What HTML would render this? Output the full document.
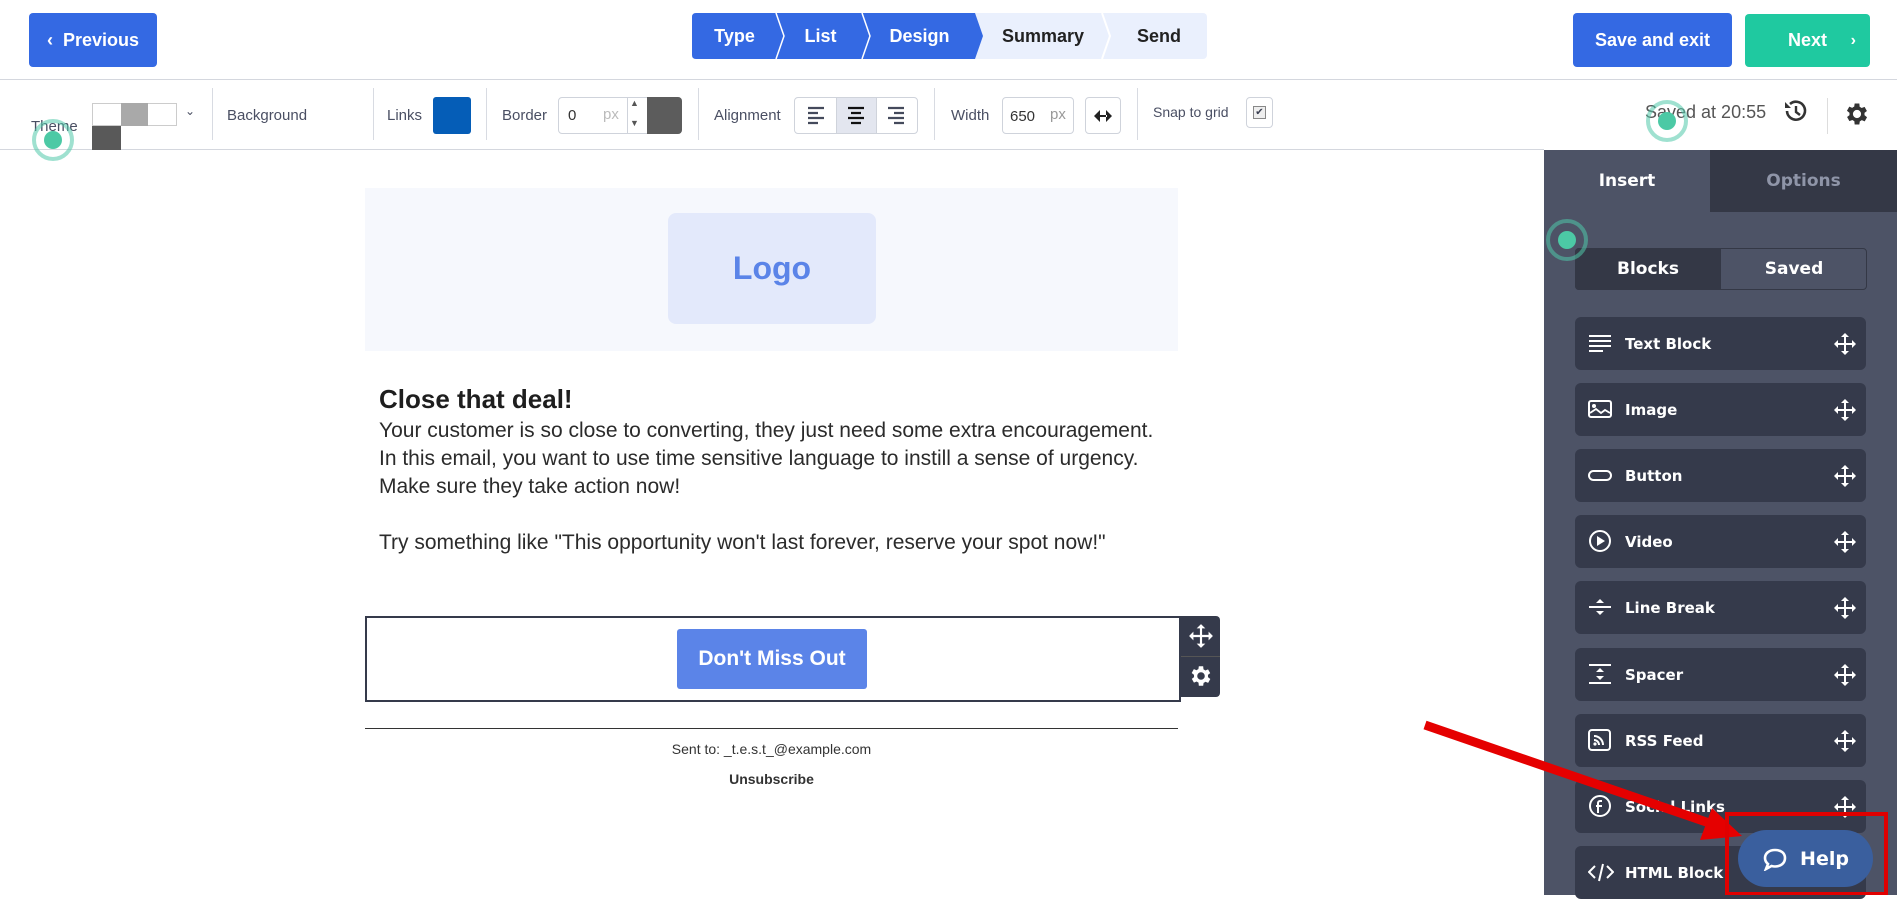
<!DOCTYPE html>
<html><head><meta charset="utf-8"><style>
*{box-sizing:border-box;margin:0;padding:0}
body{width:1897px;height:895px;overflow:hidden;background:#fff;font-family:"Liberation Sans",sans-serif;position:relative;color:#3a3f51}
.a{position:absolute}
.btn{position:absolute;color:#fff;font-weight:bold;font-size:18px;border-radius:4px;display:flex;align-items:center;justify-content:center}
.step{position:absolute;top:13px;height:46px;display:flex;align-items:center;justify-content:center;font-weight:bold;font-size:18px}
.lbl{position:absolute;font-size:15px;color:#4a4f63}
.sep{position:absolute;top:88px;width:1px;height:52px;background:#d8dbe2}
.item{position:absolute;left:1575px;width:291px;height:53px;background:#353a4b;border-radius:6px;color:#fff;font-weight:bold;font-size:15px;font-family:"DejaVu Sans",sans-serif;display:flex;align-items:center;padding-left:50px}
.item svg.ic{position:absolute;left:13px;top:15px}
.ring{position:absolute;width:42px;height:42px;border-radius:50%;border:4px solid rgba(80,200,170,.55)}
.ring:after{content:"";position:absolute;left:8px;top:8px;width:18px;height:18px;border-radius:50%;background:#4cc9a5}
p.t{font-size:21px;line-height:28px;color:#2b2b2b}
.tab{position:absolute;display:flex;align-items:center;justify-content:center;font-weight:bold;font-size:17px;font-family:"DejaVu Sans",sans-serif}
</style></head><body>
<div class="btn" style="left:29px;top:13px;width:128px;height:54px;background:#3469e3">‹&nbsp;&nbsp;Previous</div>
<div class="a" style="left:692px;top:13px;width:515px;height:46px;background:#eaf0fd;border-radius:4px"></div>
<svg class="a" style="left:692px;top:13px" width="420" height="46"><path d="M4 0H283L291 23L283 46H4Q0 46 0 42V4Q0 0 4 0Z" fill="#3469e3"/><path d="M84 0L92 23L84 46M170 0L178 23L170 46" stroke="#fff" stroke-width="1.5" fill="none"/><path d="M410 0L418 23L410 46" stroke="#fff" stroke-width="2" fill="none"/></svg>
<div class="step" style="left:692px;width:85px;color:#fff">Type</div>
<div class="step" style="left:777px;width:87px;color:#fff">List</div>
<div class="step" style="left:864px;width:111px;color:#fff">Design</div>
<div class="step" style="left:975px;width:136px;color:#222">Summary</div>
<div class="step" style="left:1111px;width:96px;color:#222">Send</div>
<div class="btn" style="left:1573px;top:13px;width:159px;height:54px;background:#3469e3">Save and exit</div>
<div class="btn" style="left:1745px;top:14px;width:125px;height:53px;background:#1fc9a0">Next<span style="position:absolute;right:14px;font-size:16px">›</span></div>
<div class="a" style="left:0;top:79px;width:1897px;height:1px;background:#d4d7de"></div>
<div class="a" style="left:0;top:149px;width:1544px;height:1px;background:#d4d7de"></div>

<div class="lbl" style="left:31px;top:118px">Theme</div>
<div class="a" style="left:92px;top:103px;width:85px;height:23px;border:1px solid #ccc;background:#fff"></div>
<div class="a" style="left:121px;top:103px;width:27px;height:23px;background:#a9a9a9"></div>
<div class="a" style="left:92px;top:126px;width:29px;height:24px;background:#595959"></div>
<div class="lbl" style="left:185px;top:104px;font-size:12px">⌄</div>
<div class="sep" style="left:212px"></div>
<div class="lbl" style="left:227px;top:107px">Background</div>
<div class="sep" style="left:373px"></div>
<div class="lbl" style="left:387px;top:107px">Links</div>
<div class="a" style="left:433px;top:97px;width:38px;height:37px;background:#055db7;border-radius:3px"></div>
<div class="sep" style="left:486px"></div>
<div class="lbl" style="left:502px;top:107px">Border</div>
<div class="a" style="left:558px;top:97px;width:124px;height:37px;border:1px solid #cfd3db;border-radius:4px;background:#fff"></div>
<div class="lbl" style="left:568px;top:107px;color:#333">0</div>
<div class="lbl" style="left:603px;top:106px;color:#bbb">px</div>
<div class="a" style="left:627px;top:97px;width:1px;height:37px;background:#cfd3db"></div>
<div class="lbl" style="left:630px;top:98px;font-size:9px;color:#555">▲</div>
<div class="lbl" style="left:630px;top:118px;font-size:9px;color:#555">▼</div>
<div class="a" style="left:647px;top:97px;width:35px;height:37px;background:#5c5c5c;border-radius:0 4px 4px 0"></div>
<div class="sep" style="left:698px"></div>
<div class="lbl" style="left:714px;top:107px">Alignment</div>
<div class="a" style="left:794px;top:97px;width:124px;height:37px;border:1px solid #cfd3db;border-radius:4px;background:#fff"></div>
<div class="a" style="left:836px;top:98px;width:41px;height:35px;background:#e3e6ef;border-left:1px solid #cfd3db;border-right:1px solid #cfd3db"></div>
<svg class="a" style="left:805px;top:105px" width="110" height="20"><g stroke="#444a5c" stroke-width="2.2"><path d="M3 3h16M3 8h10M3 13h16M3 18h10"/><path d="M43 3h16M46 8h10M43 13h16M46 18h10" stroke="#111"/><path d="M83 3h16M89 8h10M83 13h16M89 18h10"/></g></svg>
<div class="sep" style="left:934px"></div>
<div class="lbl" style="left:951px;top:107px">Width</div>
<div class="a" style="left:1002px;top:97px;width:72px;height:37px;border:1px solid #cfd3db;border-radius:4px"></div>
<div class="lbl" style="left:1010px;top:108px;color:#333">650</div>
<div class="lbl" style="left:1050px;top:106px;color:#999">px</div>
<div class="a" style="left:1085px;top:97px;width:36px;height:37px;border:1px solid #cfd3db;border-radius:4px"></div>
<svg class="a" style="left:1093px;top:109px" width="20" height="14"><path d="M1 7L7 1V13ZM19 7L13 1V13Z M6 6h8v2H6z" fill="#222"/></svg>
<div class="sep" style="left:1137px"></div>
<div class="lbl" style="left:1153px;top:104px;font-size:14px">Snap to grid</div>
<div class="a" style="left:1246px;top:97px;width:27px;height:31px;border:1px solid #cfd3db;border-radius:4px"></div>
<div class="a" style="left:1253px;top:106px;width:13px;height:13px;border:1px solid #888;background:#eee;font-size:10px;line-height:12px;text-align:center">✔</div>
<div class="lbl" style="left:1645px;top:102px;font-size:18px;color:#555">Saved at 20:55</div>
<svg class="a" style="left:1782px;top:98px" width="26" height="26"><path d="M5 13A9 9 0 1 0 8 6" stroke="#333" stroke-width="2.6" fill="none"/><path d="M3 4v6h6z" fill="#333"/><path d="M14 8v6l4 3" stroke="#333" stroke-width="2.4" fill="none"/></svg>
<div class="a" style="left:1827px;top:98px;width:1px;height:36px;background:#ddd"></div>
<svg class="a" style="left:1843px;top:100px" width="28" height="28" viewBox="0 0 24 24"><path fill="#333" d="M19.4 13a7.5 7.5 0 0 0 0-2l2.1-1.6-2-3.5-2.5 1a7 7 0 0 0-1.7-1L15 3h-4l-.4 2.7a7 7 0 0 0-1.7 1l-2.5-1-2 3.5L6.6 11a7.5 7.5 0 0 0 0 2l-2.1 1.6 2 3.5 2.5-1a7 7 0 0 0 1.7 1L11 21h4l.4-2.7a7 7 0 0 0 1.7-1l2.5 1 2-3.5zM13 15.5a3.5 3.5 0 1 1 0-7 3.5 3.5 0 0 1 0 7z" transform="translate(-1 0)"/></svg>

<!-- email -->
<div class="a" style="left:365px;top:188px;width:813px;height:163px;background:#f6f8fd"></div>
<div class="a" style="left:668px;top:213px;width:208px;height:111px;background:#e3e9fb;border-radius:8px;display:flex;align-items:center;justify-content:center;color:#5b84e8;font-weight:bold;font-size:32px">Logo</div>
<div class="a" style="left:379px;top:384px;font-size:26px;font-weight:bold;color:#1e1e1e">Close that deal!</div>
<div class="a" style="left:379px;top:417px;width:800px">
<p class="t">Your customer is so close to converting, they just need some extra encouragement.</p>
<p class="t">In this email, you want to use time sensitive language to instill a sense of urgency.</p>
<p class="t">Make sure they take action now!</p>
<p class="t">&nbsp;</p>
<p class="t">Try something like "This opportunity won't last forever, reserve your spot now!"</p></div>
<div class="a" style="left:365px;top:616px;width:816px;height:86px;border:2px solid #353a4b"></div>
<div class="a" style="left:677px;top:629px;width:190px;height:60px;background:#5b84e8;border-radius:3px;color:#fff;font-weight:bold;font-size:21px;display:flex;align-items:center;justify-content:center">Don't Miss Out</div>
<div class="a" style="left:1181px;top:616px;width:39px;height:81px;background:#353a4b;border-radius:0 4px 4px 0"></div>
<div class="a" style="left:1181px;top:656px;width:39px;height:1px;background:#555"></div>
<svg class="a" style="left:1188px;top:623px" width="26" height="26" viewBox="0 0 24 24"><path fill="#fff" d="M12 1l4 4h-3v6h6V8l4 4-4 4v-3h-6v6h3l-4 4-4-4h3v-6H5v3l-4-4 4-4v3h6V5H8z"/></svg>
<svg class="a" style="left:1188px;top:663px" width="26" height="26" viewBox="0 0 24 24"><path fill="#fff" d="M19.4 13a7.5 7.5 0 0 0 0-2l2.1-1.6-2-3.5-2.5 1a7 7 0 0 0-1.7-1L15 3h-4l-.4 2.7a7 7 0 0 0-1.7 1l-2.5-1-2 3.5L6.6 11a7.5 7.5 0 0 0 0 2l-2.1 1.6 2 3.5 2.5-1a7 7 0 0 0 1.7 1L11 21h4l.4-2.7a7 7 0 0 0 1.7-1l2.5 1 2-3.5zM13 15.5a3.5 3.5 0 1 1 0-7 3.5 3.5 0 0 1 0 7z" transform="translate(-1 0)"/></svg>
<div class="a" style="left:365px;top:728px;width:813px;height:1px;background:#333"></div>
<div class="a" style="left:365px;top:741px;width:813px;text-align:center;font-size:14px;color:#333">Sent to: _t.e.s.t_@example.com</div>
<div class="a" style="left:365px;top:771px;width:813px;text-align:center;font-size:14px;font-weight:bold;color:#333">Unsubscribe</div>

<!-- sidebar -->
<div class="a" style="left:1544px;top:150px;width:353px;height:745px;background:#4d5366"></div>
<div class="a" style="left:1710px;top:150px;width:187px;height:62px;background:#343846"></div>
<div class="tab" style="left:1544px;top:150px;width:166px;height:62px;color:#fff">Insert</div>
<div class="tab" style="left:1710px;top:150px;width:187px;height:62px;color:#8f95a8">Options</div>
<div class="a" style="left:1575px;top:248px;width:292px;height:42px;border:1px solid #343846;border-radius:4px;background:#4d5366"></div>
<div class="tab" style="left:1575px;top:248px;width:146px;height:42px;background:#343846;border-radius:4px 0 0 4px;color:#fff">Blocks</div>
<div class="tab" style="left:1721px;top:248px;width:146px;height:42px;color:#fff">Saved</div>

<div class="item" style="top:317px"><svg class="ic" width="24" height="22"><path d="M1 4h22M1 9h22M1 14h22M1 19h14" stroke="#fff" stroke-width="2"/></svg>Text Block</div>
<div class="item" style="top:383px"><svg class="ic" width="24" height="22"><rect x="1" y="3" width="22" height="16" rx="2" stroke="#fff" stroke-width="2" fill="none"/><circle cx="6" cy="8" r="2" fill="#fff"/><path d="M2 15l6-4 5 4 4-3 5 3" stroke="#fff" stroke-width="1.8" fill="none"/></svg>Image</div>
<div class="item" style="top:449px"><svg class="ic" width="24" height="22"><rect x="1" y="7" width="22" height="9" rx="4.5" stroke="#fff" stroke-width="2" fill="none"/></svg>Button</div>
<div class="item" style="top:515px"><svg class="ic" width="24" height="24"><circle cx="12" cy="11" r="10" stroke="#fff" stroke-width="2" fill="none"/><path d="M9 6v10l8-5z" fill="#fff"/></svg>Video</div>
<div class="item" style="top:581px"><svg class="ic" width="24" height="22"><path d="M1 11h22" stroke="#fff" stroke-width="2"/><path d="M8 7h8l-4-4zM8 15h8l-4 4z" fill="#fff"/></svg>Line Break</div>
<div class="item" style="top:648px"><svg class="ic" width="24" height="22"><path d="M1 2h22M1 20h22" stroke="#fff" stroke-width="2"/><path d="M8 9h8l-4-4zM8 13h8l-4 4z" fill="#fff"/></svg>Spacer</div>
<div class="item" style="top:714px"><svg class="ic" width="24" height="22"><rect x="1" y="1" width="21" height="20" rx="3" stroke="#fff" stroke-width="2" fill="none"/><path d="M6 7a9 9 0 0 1 9 9M6 11a5 5 0 0 1 5 5" stroke="#fff" stroke-width="2" fill="none"/><circle cx="7" cy="15" r="1.6" fill="#fff"/></svg>RSS Feed</div>
<div class="item" style="top:780px"><svg class="ic" width="24" height="24"><circle cx="12" cy="11" r="10" stroke="#fff" stroke-width="2" fill="none"/><path d="M14 6h-2a2 2 0 0 0-2 2v10M8 11h6" stroke="#fff" stroke-width="2" fill="none"/></svg>Social Links</div>
<div class="item" style="top:846px"><svg class="ic" width="26" height="22"><path d="M7 5l-6 6 6 6M19 5l6 6-6 6M15 3l-4 17" stroke="#fff" stroke-width="2" fill="none"/></svg>HTML Block</div>
<svg class="a" style="left:0;top:0;pointer-events:none" width="1897" height="895">
<defs><path id="mv" d="M12 1l4 4h-3v6h6V8l4 4-4 4v-3h-6v6h3l-4 4-4-4h3v-6H5v3l-4-4 4-4v3h6V5H8z" fill="#fff"/></defs>
<use href="#mv" x="1833" y="332"/><use href="#mv" x="1833" y="398"/><use href="#mv" x="1833" y="464"/><use href="#mv" x="1833" y="530"/><use href="#mv" x="1833" y="596"/><use href="#mv" x="1833" y="663"/><use href="#mv" x="1833" y="729"/><use href="#mv" x="1833" y="795"/>
<path d="M1425 725L1715 825" stroke="#e50000" stroke-width="9"/>
<path d="M1742 836L1700 840L1712 808Z" fill="#e50000"/>
<rect x="1727" y="814" width="159" height="80" stroke="#e00000" stroke-width="4" fill="none"/>
</svg>
<div class="a" style="left:1738px;top:830px;width:135px;height:57px;border-radius:29px;background:#3a5f9e;color:#fff;font-weight:bold;font-size:19px;font-family:'DejaVu Sans',sans-serif;display:flex;align-items:center;justify-content:center;gap:12px"><svg width="26" height="24"><path d="M13 3C7 3 3 6.5 3 11c0 2.4 1.2 4.5 3 6l-2 5 5.5-3c1.1.3 2.3.5 3.5.5 6 0 10-3.5 10-8.5S19 3 13 3z" stroke="#fff" stroke-width="2.6" fill="none"/></svg>Help</div>
<div class="ring" style="left:32px;top:119px"></div>
<div class="ring" style="left:1646px;top:100px"></div>
<div class="ring" style="left:1546px;top:219px"></div>
</body></html>
